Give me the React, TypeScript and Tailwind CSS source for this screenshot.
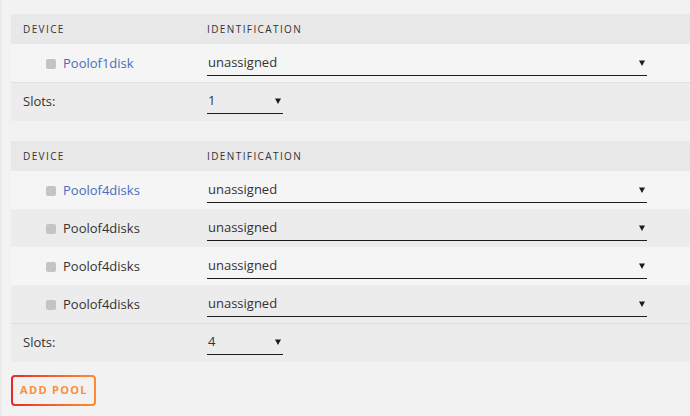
const disks = [
  { name: "Poolof4disks", first: true },
  { name: "Poolof4disks" },
  { name: "Poolof4disks" },
  { name: "Poolof4disks" },
];

function Arrow() {
  return (
    <svg width="6" height="6" viewBox="0 0 6 6" className="shrink-0">
      <polygon points="0,0.5 6,0.5 3,6" fill="#1c1c1c" />
    </svg>
  );
}

function Select({ value, width }: { value: string; width: string }) {
  return (
    <div
      className={`flex h-[25px] items-center justify-between border-b border-[#1c1c1c] pl-[1px] pr-[2px] ${width}`}
    >
      <span>{value}</span>
      <Arrow />
    </div>
  );
}

function Header() {
  return (
    <div className="flex h-[30px] items-center bg-[#e8e8e8] text-[10px] tracking-[1.4px] text-[#333]">
      <div className="w-[196px] pl-[12px]">DEVICE</div>
      <div>IDENTIFICATION</div>
    </div>
  );
}

function DeviceRow({ name, link, shade }: { name: string; link?: boolean; shade?: boolean }) {
  return (
    <div className={`flex h-[38px] items-start pt-[7px] ${shade ? "bg-[#ececec]" : "bg-[#f5f5f5]"}`}>
      <div className="flex h-[25px] w-[196px] items-center pl-[35px]">
        <span className="mr-[7px] h-[10px] w-[10px] rounded-[2px] bg-[#c4c4c4]" />
        <span className={link ? "text-[#486dba]" : "text-[#333]"}>{name}</span>
      </div>
      <Select value="unassigned" width="w-[440px]" />
    </div>
  );
}

function SlotsRow({ value }: { value: string }) {
  return (
    <div className="flex h-[39px] items-start border-t border-[#e0e0e0] bg-[#ececec] pt-[6px]">
      <div className="flex h-[25px] w-[196px] items-center pl-[12px]">Slots:</div>
      <Select value={value} width="w-[76px]" />
    </div>
  );
}

export default function App() {
  return (
    <div
      className="min-h-[416px] w-[690px] border-l-2 border-[#ebebeb] bg-[#f2f2f2] pl-[9px] pt-[14px] text-[13px] text-[#333]"
      style={{ fontFamily: '"Open Sans", sans-serif' }}
    >
      <div>
        <Header />
        <DeviceRow name="Poolof1disk" link />
        <SlotsRow value="1" />
      </div>

      <div className="mt-[20px]">
        <Header />
        {disks.map((d, i) => (
          <DeviceRow key={i} name={d.name} link={d.first} shade={i % 2 === 1} />
        ))}
        <SlotsRow value="4" />
      </div>

      <div className="mt-[13px]">
        <button className="rounded-[4px] bg-gradient-to-r from-[#e22828] to-[#ff8c2f] p-[2px]">
          <span className="flex h-[27px] w-[81px] items-center justify-center rounded-[2px] bg-[#f2f2f2]">
            <span className="pl-[1px] text-[11px] font-bold tracking-[1.3px] text-[#f7913d]">
              ADD POOL
            </span>
          </span>
        </button>
      </div>
    </div>
  );
}
